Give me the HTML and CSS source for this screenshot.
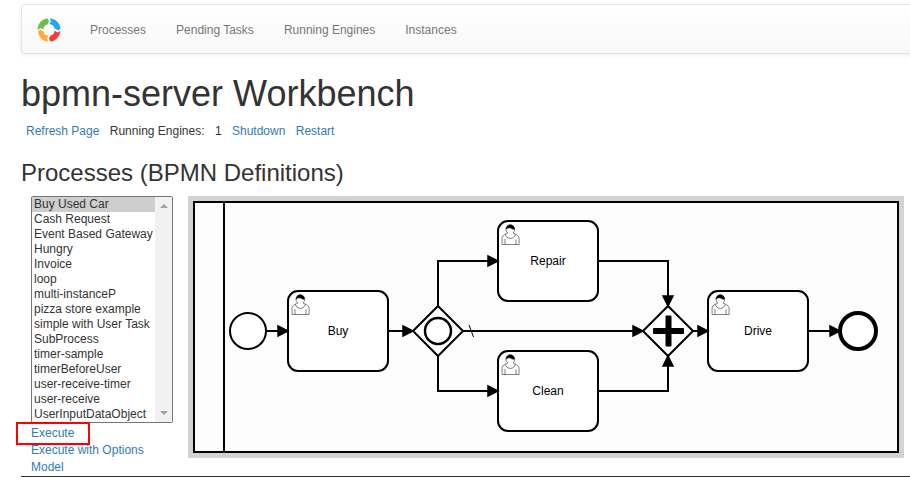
FILE: index.html
```html
<!DOCTYPE html>
<html lang="en">
<head>
<meta charset="utf-8">
<title>bpmn-server Workbench</title>
<link rel="stylesheet" href="styles.css">
</head>
<body>
<div class="page">
  <nav class="navbar">
    <svg class="logo" width="24" height="24" viewBox="0 0 24 24">
      <path fill="#6cc04a" d="M0.500 12C1 5 5 1 10.500 0.500L12 3 10.500 6.500C8 7 6.500 8.500 6.500 11.500L3.500 10Z"/>
      <path fill="#22a7f0" d="M12.500 0.500C18.500 0.500 23 5 23.500 10.500L21.500 12.500 17.500 10.500C17 8 16 7 12.500 6L14 3Z"/>
      <path fill="#fb3b36" d="M23.300 13C23 19 18.500 23 13.500 23.500L12 20.500 13.500 17.500C16 17 17.500 15.500 17.500 12.500L20.500 14.500Z"/>
      <path fill="#ffa940" d="M11.500 23.500C5.500 23.300 1.500 19 1 13.500L3 11.500 6.500 13.500C7 16 8 17 11.500 17.800L10 21Z"/>
    </svg>
    <a>Processes</a><a>Pending Tasks</a><a>Running Engines</a><a>Instances</a>
  </nav>
  <h1>bpmn-server Workbench</h1>
  <div class="toolbar">
    <a>Refresh Page</a><span>Running Engines:</span><span>1</span><a>Shutdown</a><a>Restart</a>
  </div>
  <h3>Processes (BPMN Definitions)</h3>
  <div class="content">
    <div class="side">
      <div class="listbox">
        <ul>
          <li class="selected">Buy Used Car</li><li>Cash Request</li><li>Event Based Gateway</li><li>Hungry</li><li>Invoice</li><li>loop</li><li>multi-instanceP</li><li>pizza store example</li><li>simple with User Task</li><li>SubProcess</li><li>timer-sample</li><li>timerBeforeUser</li><li>user-receive-timer</li><li>user-receive</li><li>UserInputDataObject</li>
        </ul>
        <div class="scrollbar"><i class="up"></i><i class="down"></i></div>
      </div>
      <div class="actions">
        <div class="action"><a>Execute</a><span class="highlight"></span></div>
        <div class="action"><a>Execute with Options</a></div>
        <div class="action"><a>Model</a></div>
      </div>
    </div>
    <svg class="diagram" width="706" height="252" viewBox="193 201 706 252">
      <defs>
        <marker id="arrow" viewBox="0 0 20 20" refX="11" refY="10" markerWidth="10" markerHeight="10" orient="auto">
          <path d="M1 5L11 10L1 15Z" stroke="#000" stroke-width="1.500"/>
        </marker>
        <g id="user" stroke="#000" stroke-width=".5" fill="#fff">
          <path d="m15,12c.909-.845 1.594-2.049 1.594-3.385 0-2.554-1.805-4.622-4.357-4.622-2.552 0-4.288 2.068-4.288 4.622 0 1.348.974 2.562 1.896 3.405-.529.187-5.669 2.097-5.794 4.756v6.718h17v-6.718c0-2.298-5.528-4.595-6.051-4.776zm-8,6l0,5.500m11,0l0,-5"/>
          <path d="m17.162,13.009c0 2.447-2.158 4.431-4.821 4.431-2.665 0-4.822-1.981-4.822-4.431"/>
          <path fill="#000" d="m8.100,8.200c0 0 2.251-2.358 4.274-1.177 2.024 1.181 4.221 1.537 4.124.965-.098-.57-.117-3.791-4.191-4.136-3.575.001-4.208 3.673-4.207 4.348z"/>
        </g>
        <g id="task">
          <rect width="100" height="80" rx="10"/>
          <use href="#user"/>
        </g>
      </defs>
      <g class="shape">
        <path class="pool" d="M194 202H898V452H194ZM224 202V452"/>
        <circle cx="248" cy="331" r="18"/>
        <use href="#task" x="288" y="291"/>
        <use href="#task" x="498" y="221"/>
        <use href="#task" x="498" y="351"/>
        <use href="#task" x="708" y="291"/>
        <path d="M438 306L463 331 438 356 413 331Z"/>
        <circle cx="438" cy="331" r="13" stroke-width="2.500"/>
        <path d="M668 306L693 331 668 356 643 331Z"/>
        <path class="plus" d="M666 316v12.500h-12.500v5h12.500v12.500h5v-12.500h12.500v-5h-12.500v-12.500z"/>
        <circle cx="858" cy="331" r="18" stroke-width="4"/>
      </g>
      <g class="flow">
        <path d="M266 331H288"/><path d="M388 331H413"/>
        <path d="M438 306V261H498"/><path d="M438 356V391H498"/>
        <path d="M463 331H643"/>
        <path d="M598 261H668V306"/><path d="M598 391H668V356"/>
        <path d="M693 331H708"/><path d="M808 331H840"/>
      </g>
      <path d="M469 325L473.500 337" stroke="#000" stroke-width="1"/>
      <g class="label">
        <text x="338" y="335">Buy</text><text x="548" y="265">Repair</text>
        <text x="548" y="395">Clean</text><text x="758" y="335">Drive</text>
      </g>
    </svg>
  </div>
  <hr>
</div>
</body>
</html>
```
FILE: styles.css
```css
* { box-sizing: border-box; }
body {
  margin: 0;
  overflow: hidden;
  background: #fff;
  color: #333;
  font: 12px/17px "Liberation Sans", Arial, sans-serif;
}
.page { width: 940px; padding: 4px 0 0 21px; }
a { color: #337ab7; text-decoration: none; }
.navbar {
  display: flex;
  align-items: center;
  gap: 30px;
  height: 50px;
  padding: 2px 15px 0 15px;
  border: 1px solid #e4e4e4;
  border-radius: 4px;
  background: linear-gradient(#fff, #f8f8f8);
  box-shadow: 0 1px 5px rgba(0, 0, 0, .075);
}
.navbar a { color: #777; }
.logo { margin-right: -1px; }
h1, h3 { margin: 0; font-weight: normal; }
h1 { margin-top: 20px; font-size: 36px; line-height: 40px; }
.toolbar { display: flex; gap: 10.4px; margin-top: 9px; padding-left: 5px; }
h3 { margin-top: 20px; font-size: 24px; line-height: 26px; }
.content { display: flex; height: 262px; margin-top: 10px; }
.side { width: 167px; padding-left: 10px; }
.listbox {
  display: flex;
  width: 142px;
  height: 227px;
  border: 1px solid #767676;
  border-radius: 2px;
}
ul { flex: 1; margin: 0; padding: 0; list-style: none; line-height: 15px; }
li { height: 15px; padding-left: 2px; white-space: nowrap; }
.selected { background: #cecece; }
.scrollbar {
  display: flex;
  flex-direction: column;
  justify-content: space-between;
  align-items: center;
  width: 17px;
  padding: 7px 0;
  background: #f1f1f1;
}
.up, .down { border: 4px solid transparent; border-top-width: 0; border-bottom: 4px solid #a3a3a3; }
.down { border-top: 4px solid #a3a3a3; border-bottom-width: 0; }
.actions { padding-top: 2px; }
.action { position: relative; height: 17px; }
.highlight {
  position: absolute;
  z-index: 1;
  left: -15px;
  top: -3px;
  width: 74px;
  height: 23px;
  border: 2px solid #f00;
}
.diagram {
  box-sizing: content-box;
  border: 5px solid #d3d3d3;
  background: #fdfdfd;
}
.shape { fill: #fff; stroke: #000; stroke-width: 2; }
.shape .pool { fill: #fdfdfd; }
.shape .plus { fill: #000; stroke-width: 1; }
.flow { fill: none; stroke: #000; stroke-width: 2; }
.flow path { marker-end: url(#arrow); }
#arrow path { fill: #000; }
.label { fill: #000; text-anchor: middle; }
hr { height: 1px; margin: 18px 0 0; border: 0; background: #333; }
```
